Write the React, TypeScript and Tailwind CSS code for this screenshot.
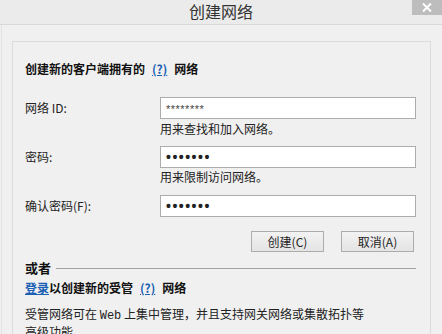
import React from 'react';

const cjk = { fontFamily: '"Noto Sans CJK SC", "Noto Sans", sans-serif' };
const latin = { fontFamily: '"Liberation Sans", Arial, sans-serif' };

function HelpLink() {
  return <span className="text-[#1a5fb4] underline font-bold mx-[7px]">(?)</span>;
}

function Field({ label, value, dots }: { label: string; value: string; dots?: boolean }) {
  return (
    <div className="flex items-center h-[22px]">
      <div className="w-[135px] text-[12px] text-[#222]">{label}</div>
      <div className="w-[256px] h-[22px] border border-[#adadad] bg-white flex items-center px-[5px]">
        <span
          style={latin}
          className={
            dots
              ? 'text-[14px] font-bold tracking-[1.5px] text-[#222] leading-none'
              : 'text-[11px] text-[#444] tracking-[0.5px] leading-none mt-[2px]'
          }
        >
          {value}
        </span>
      </div>
    </div>
  );
}

export default function App() {
  return (
    <div className="w-[442px] h-[334px] overflow-hidden bg-[#f0f0f0] flex flex-col" style={cjk}>
      {/* title bar */}
      <div className="h-[25px] shrink-0 bg-[#ebebeb] border-b border-[#d9d9d9] flex items-start">
        <div className="w-[30px] shrink-0" />
        <div className="flex-1 h-[22px] flex items-center justify-center text-[16px] text-[#333] leading-none">
          创建网络
        </div>
        <div className="w-[30px] h-[15px] shrink-0 bg-[#bdbdbd] flex items-center justify-center">
          <svg width="10" height="9" viewBox="0 0 10 9">
            <path d="M1 0.5 L9 8.5 M9 0.5 L1 8.5" stroke="#ffffff" strokeWidth="2" />
          </svg>
        </div>
      </div>

      {/* body */}
      <div className="flex-1 ml-px border-l border-[#e2e2e2] pl-[10px] pt-[16px]">
        <div className="w-[419px] h-[400px] border border-[#dcdcdc] pl-[12px] pr-[14px]">
          <div className="pt-[19px] h-[35px] leading-4 text-[12px] font-bold text-[#111]">
            创建新的客户端拥有的<HelpLink />网络
          </div>

          <div className="mt-[20px]">
            <Field label="网络 ID:" value="********" />
          </div>
          <div className="mt-[2px] pl-[135px] text-[12px] leading-4 text-[#222]">用来查找和加入网络。</div>

          <div className="mt-[9px]">
            <Field label="密码:" value="•••••••" dots />
          </div>
          <div className="mt-px pl-[135px] text-[12px] leading-4 text-[#222]">用来限制访问网络。</div>

          <div className="mt-[10px]">
            <Field label="确认密码(F):" value="•••••••" dots />
          </div>

          <div className="mt-[14px] flex justify-end gap-[17px] pr-[2px]">
            <button className="w-[73px] h-[21px] border border-[#acacac] bg-gradient-to-b from-[#f2f2f2] to-[#e4e4e4] text-[12px] text-[#222] leading-none">
              创建(C)
            </button>
            <button className="w-[73px] h-[21px] border border-[#acacac] bg-gradient-to-b from-[#f2f2f2] to-[#e4e4e4] text-[12px] text-[#222] leading-none">
              取消(A)
            </button>
          </div>

          <div className="mt-[7px] h-[18px] flex items-center gap-[5px]">
            <span className="text-[13px] font-bold text-[#111]">或者</span>
            <div className="flex-1 h-px bg-[#a0a0a0]" />
          </div>

          <div className="mt-[3px] h-4 leading-4 text-[12px] font-bold text-[#111]">
            <span className="text-[#1a5fb4] underline">登录</span>以创建新的受管<HelpLink />网络
          </div>

          <div className="mt-[10px] leading-4 text-[12px] text-[#222]">
            受管网络可在{' '}
            <span style={{ fontFamily: '"Liberation Mono", monospace' }} className="text-[12px]">
              Web
            </span>{' '}
            上集中管理，并且支持网关网络或集散拓扑等
            <br />
            高级功能
          </div>
        </div>
      </div>
    </div>
  );
}
